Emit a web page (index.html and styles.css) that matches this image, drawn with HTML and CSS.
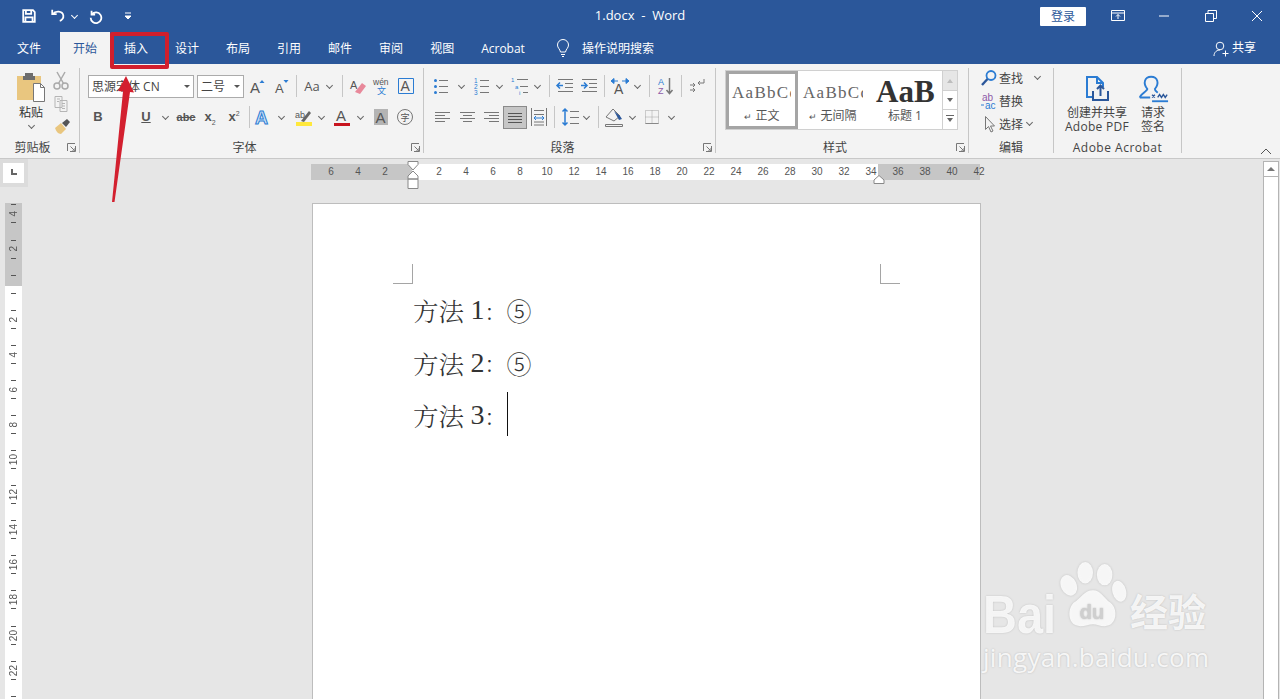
FILE: index.html
```html
<!DOCTYPE html>
<html lang="zh-CN">
<head>
    <meta charset="UTF-8">
    <meta name="viewport" content="width=device-width, initial-scale=1.0">
    <title>1.docx - Word</title>
    <link rel="stylesheet" href="styles.css">
</head>
<body>
    <!-- title bar -->
    <div class="titlebar">
        <div class="qat">
            <svg class="qat-ic" viewBox="0 0 18 18"><path d="M2.500 2.500h11l2 2v11h-13z M5.500 2.500v4h6v-4 M5 15.500v-5h8v5" stroke-width="2"/></svg>
            <svg class="qat-ic undo" viewBox="0 0 18 18"><path d="M2.500 2v5h5 M3 7c3-4 11-4 12 1.500 .5 3-2 5.500-4 6" stroke-width="2"/></svg>
            <span class="chev chev-white"></span>
            <svg class="qat-ic redo" viewBox="0 0 18 18"><path d="M4 3v4.500h4 M4.500 7a6 6 0 1 1-1.500 4" stroke-width="2"/></svg>
            <svg class="qat-more" viewBox="0 0 8 8"><path d="M1 1h6M1 4h6l-3 3z" fill="#fff" stroke="#fff"/></svg>
        </div>
        <div class="doc-title">1.docx &nbsp;-&nbsp; Word</div>
        <div class="winctl">
            <button class="signin">登录</button>
            <svg class="win-ic opt" viewBox="0 0 14 12"><path d="M.5 .5h13v10H.5zM.5 3h13M7 9V4.500M5 6.500l2-2 2 2"/></svg>
            <svg class="win-ic min" viewBox="0 0 12 12"><path d="M1 6h10"/></svg>
            <svg class="win-ic rest" viewBox="0 0 12 12"><path d="M.5 3.500h8v8h-8zM3 3.500V.5h8.500v8H8.500"/></svg>
            <svg class="win-ic cls" viewBox="0 0 12 12"><path d="M1 1l10 10M11 1L1 11"/></svg>
        </div>
    </div>

    <!-- tabs -->
    <div class="tabs">
        <div class="tab tab-file">文件</div>
        <div class="tab tab-active">开始</div>
        <div class="tab">插入</div>
        <div class="tab">设计</div>
        <div class="tab">布局</div>
        <div class="tab">引用</div>
        <div class="tab">邮件</div>
        <div class="tab">审阅</div>
        <div class="tab">视图</div>
        <div class="tab">Acrobat</div>
        <svg class="lamp" viewBox="0 0 14 18"><path d="M4.500 13C4 10 1.500 9 1.500 6a5.500 5.500 0 0 1 11 0c0 3-2.500 4-3 7zM5 15.500h4M6 17.500h2"/></svg>
        <div class="tell">操作说明搜索</div>
        <div class="share">
            <svg class="share-ic" viewBox="0 0 16 16"><circle cx="7" cy="5" r="3.800"/><path d="M1 15c0-4 3-6 6-6M9.500 12.500h6M12.500 9.500v6"/></svg>
            共享
        </div>
    </div>

    <!-- ribbon -->
    <div class="ribbon">
        <div class="group g-clip">
            <div class="group-body clip-body">
                <div class="paste">
                    <svg class="paste-ic" viewBox="0 0 30 30">
                        <path d="M1 4h24v24H1z" fill="#e9c67f" stroke="none"/>
                        <path d="M9 4V1h8v3h2v4H7V4z" fill="#6d6d6d" stroke="none"/>
                        <path d="M17.500 11.500h7l4 4v14h-11z" fill="#fff" stroke="#777"/>
                        <path d="M24.500 11.500v4h4" stroke="#777"/>
                    </svg>
                    <div class="paste-label">粘贴</div>
                    <span class="chev"></span>
                </div>
                <div class="clip-col">
                    <svg class="ic" viewBox="0 0 24 24"><circle cx="8" cy="18" r="3" stroke="#aaa" stroke-width="1.500"/><circle cx="16" cy="18" r="3" stroke="#aaa" stroke-width="1.500"/><path d="M9.500 15.500L16 4M14.500 15.500L8 4" stroke="#aaa" stroke-width="1.500"/></svg>
                    <svg class="ic" viewBox="0 0 24 24"><path d="M6 5.500h7v11H6zM11 9.500h7v11h-7zM8 8h3M8 10.500h2M13 12.500h3M13 15h3M13 17.500h3" stroke="#b5b5b5"/></svg>
                    <svg class="ic" viewBox="0 0 24 24"><path d="M6 14l6-5 5 6-5 5c-3 0-5-3-6-6z" fill="#e9c67f" stroke="none"/><path d="M13 9l5-4 3 3-4 5z" fill="#555" stroke="none"/></svg>
                </div>
            </div>
            <div class="group-label">剪贴板</div>
            <svg class="launch" viewBox="0 0 9 9"><path d="M.5 8V.5H8M8.500 3v5.500H3M3.500 3.500l4 4M8 5v3H5"/></svg>
        </div>

        <div class="group g-font">
            <div class="group-body">
                <div class="row row-font1">
                    <div class="select select-font">思源宋体 CN</div>
                    <div class="select select-size">二号</div>
                    <svg class="ic" viewBox="0 0 24 24"><text x="5" y="19" font-size="15">A</text><path d="M14.500 9l2.500-3 2.500 3z" fill="#2b7cd3" stroke="none"/></svg>
                    <svg class="ic" viewBox="0 0 24 24"><text x="6" y="19" font-size="13">A</text><path d="M14.500 6l2.500 3 2.500-3z" fill="#2b7cd3" stroke="none"/></svg>
                    <span class="sep"></span>
                    <div class="tool tool-text">Aa</div>
                    <span class="chev"></span>
                    <span class="sep sep-wide"></span>
                    <svg class="ic" viewBox="0 0 24 24"><text x="4" y="15" font-size="11">A</text><path d="M9 18l7-9 4 3-6 8z" fill="#e8889a" stroke="none"/></svg>
                    <svg class="ic" viewBox="0 0 24 24"><text x="3" y="11" font-size="8.500">wén</text><text class="blue" x="7" y="20" font-size="9">文</text></svg>
                    <svg class="ic" viewBox="0 0 24 24"><path d="M4.500 4.500h15v15h-15z" stroke="#2b7cd3"/><text x="6.500" y="17" font-size="14">A</text></svg>
                </div>
                <div class="row row-font2">
                    <div class="tool tool-b">B</div>
                    <div class="tool tool-i">I</div>
                    <div class="tool tool-u">U</div>
                    <span class="chev chev-14"></span>
                    <div class="tool tool-abc ml2">abc</div>
                    <div class="tool tool-sub">x<sub>2</sub></div>
                    <div class="tool tool-sub">x<sup>2</sup></div>
                    <span class="sep sep-2"></span>
                    <svg class="ic" viewBox="0 0 24 24"><text class="a-outline" x="3" y="19" font-size="18">A</text></svg>
                    <span class="chev"></span>
                    <svg class="ic ml6" viewBox="0 0 24 24"><text x="3" y="13" font-size="9">ab</text><path d="M9 16l8-10 2 2-7 9z" fill="#666" stroke="none"/><path d="M4 17h16v4H4z" fill="#ffe83c" stroke="none"/></svg>
                    <span class="chev"></span>
                    <svg class="ic ml4" viewBox="0 0 24 24"><text x="6" y="16" font-size="15">A</text><path d="M4 18h16v3H4z" fill="#c8141e" stroke="none"/></svg>
                    <span class="chev ml1"></span>
                    <svg class="ic ml4" viewBox="0 0 24 24"><path d="M5 4h14v16H5z" fill="#b4b4b4" stroke="none"/><text x="6.500" y="18" font-size="15">A</text></svg>
                    <svg class="ic" viewBox="0 0 24 24"><circle cx="12" cy="12" r="7.500"/><text x="7.500" y="15.500" font-size="9">字</text></svg>
                </div>
            </div>
            <div class="group-label">字体</div>
            <svg class="launch" viewBox="0 0 9 9"><path d="M.5 8V.5H8M8.500 3v5.500H3M3.500 3.500l4 4M8 5v3H5"/></svg>
        </div>

        <div class="group g-para">
            <div class="group-body">
                <div class="row row-para1">
                    <svg class="ic" viewBox="0 0 24 24"><path d="M9 6.500h9M9 12.500h9M9 18.500h9"/><circle class="dot" cx="5.500" cy="6.500" r="1.500"/><circle class="dot" cx="5.500" cy="12.500" r="1.500"/><circle class="dot" cx="5.500" cy="18.500" r="1.500"/></svg>
                    <span class="chev chev-14"></span>
                    <svg class="ic ml2" viewBox="0 0 24 24"><path d="M10 6.500h9M10 12.500h9M10 18.500h9"/><text class="blue" x="4" y="9" font-size="6.500">1</text><text class="blue" x="4" y="15" font-size="6.500">2</text><text class="blue" x="4" y="21" font-size="6.500">3</text></svg>
                    <span class="chev"></span>
                    <svg class="ic ml4" viewBox="0 0 24 24"><path d="M9 5.500h11M12 12.500h8M15 18.500h5"/><text class="blue" x="3" y="8" font-size="6">1</text><text class="blue" x="7" y="15" font-size="6">a</text><text class="blue" x="11" y="21" font-size="6">i</text></svg>
                    <span class="chev"></span>
                    <span class="sep sep-para"></span>
                    <svg class="ic" viewBox="0 0 24 24"><path d="M5 5.500h15M12 9.500h8M12 13.500h8M5 17.500h15" /><path d="M10 11.500H4M7 8.500l-3 3 3 3" stroke="#2b7cd3" stroke-width="1.500"/></svg>
                    <svg class="ic" viewBox="0 0 24 24"><path d="M5 5.500h15M12 9.500h8M12 13.500h8M5 17.500h15"/><path d="M4 11.500h6M7 8.500l3 3-3 3" stroke="#2b7cd3" stroke-width="1.500"/></svg>
                    <span class="sep"></span>
                    <svg class="ic" viewBox="0 0 24 24"><text x="6" y="20" font-size="14">A</text><path d="M3 7l3-2.500v5zM21 7l-3-2.500v5zM6 7h4M14 7h4" fill="#2b7cd3" stroke="#2b7cd3"/></svg>
                    <span class="chev"></span>
                    <span class="sep sep-para"></span>
                    <svg class="ic" viewBox="0 0 24 24"><text class="blue" x="5" y="11" font-size="9">A</text><text class="purple" x="5" y="20" font-size="9">Z</text><path d="M16.500 4v15M13.500 16l3 3.500 3-3.500" stroke-width="1.500"/></svg>
                    <span class="sep sep-3"></span>
                    <svg class="ic" viewBox="0 0 24 24"><path d="M19 5v4h-6M15 7l-2 2 2 2M5 11h5M8 9l2 2-2 2M5 16h5M8 14l2 2-2 2" /></svg>
                </div>
                <div class="row row-para2">
                    <svg class="ic" viewBox="0 0 24 24"><path d="M5 7.500h15M5 10.500h10M5 13.500h15M5 16.500h10"/></svg>
                    <svg class="ic ml1" viewBox="0 0 24 24"><path d="M5 7.500h15M8 10.500h9M5 13.500h15M8 16.500h9"/></svg>
                    <svg class="ic" viewBox="0 0 24 24"><path d="M5 7.500h15M10 10.500h10M5 13.500h15M10 16.500h10"/></svg>
                    <div class="tool tool-active"><svg class="ic-in" viewBox="0 0 24 24"><path d="M5 7.500h14M5 10.500h14M5 13.500h14M5 16.500h14" stroke="#555"/></svg></div>
                    <svg class="ic" viewBox="0 0 24 24"><path d="M4.500 3v18M19.500 3v18M7 5.500h10M7 9.500h10M7 17h10M7 20h10" /><path d="M7 13h10M9 11l-2 2 2 2M15 11l2 2-2 2" stroke="#2b7cd3"/></svg>
                    <span class="sep sep-line"></span>
                    <svg class="ic" viewBox="0 0 24 24"><path d="M11 6.500h9M11 12.500h9M11 18.500h9"/><path d="M6 4v16M3.500 6.500L6 4l2.500 2.500M3.500 17.500L6 20l2.500-2.500" stroke="#2b7cd3" stroke-width="1.500"/></svg>
                    <span class="chev chev-line"></span>
                    <span class="sep sep-shade"></span>
                    <svg class="ic" viewBox="0 0 24 24"><path d="M4 12l7-8 7 7-6 5z"/><path d="M12 6l6 5 2 3-3 1z" fill="#2b579a" stroke="none"/><path d="M3.500 19.500h17v2h-17z" stroke="#777"/></svg>
                    <span class="chev ml1"></span>
                    <svg class="ic ml3" viewBox="0 0 24 24"><path class="dash" d="M5.500 5.500h13v13h-13zM12 5.500v13M5.500 12h13" /><path d="M5.500 18.500h13" stroke="#888"/></svg>
                    <span class="chev ml2"></span>
                </div>
            </div>
            <div class="group-label">段落</div>
            <svg class="launch" viewBox="0 0 9 9"><path d="M.5 8V.5H8M8.500 3v5.500H3M3.500 3.500l4 4M8 5v3H5"/></svg>
        </div>

        <div class="group g-style">
            <div class="group-body style-body">
                <div class="gallery">
                    <div class="style-item style-on">
                        <div class="style-sample">AaBbCc</div>
                        <div class="style-name"><span class="enter">↵</span> 正文</div>
                    </div>
                    <div class="style-item">
                        <div class="style-sample">AaBbCc</div>
                        <div class="style-name"><span class="enter">↵</span> 无间隔</div>
                    </div>
                    <div class="style-item style-h1">
                        <div class="style-sample">AaB</div>
                        <div class="style-name">标题 1</div>
                    </div>
                    <div class="style-scroll">
                        <div class="scroll-btn scroll-off"><span class="tri tri-up"></span></div>
                        <div class="scroll-btn"><span class="tri tri-down"></span></div>
                        <div class="scroll-btn"><span class="tri tri-more"></span></div>
                    </div>
                </div>
            </div>
            <div class="group-label">样式</div>
            <svg class="launch" viewBox="0 0 9 9"><path d="M.5 8V.5H8M8.500 3v5.500H3M3.500 3.500l4 4M8 5v3H5"/></svg>
        </div>

        <div class="group g-edit">
            <div class="group-body edit-body">
                <div class="edit-row">
                    <svg class="edit-ic" viewBox="0 0 18 18"><circle cx="11" cy="6.500" r="4.500" stroke="#2b7cd3" stroke-width="1.800"/><path d="M7.500 10L2 16" stroke="#2b579a" stroke-width="2.400"/></svg>
                    <span>查找</span><span class="chev edit-chev"></span>
                </div>
                <div class="edit-row">
                    <svg class="edit-ic" viewBox="0 0 18 18"><text class="purple" x="2" y="9" font-size="10">ab</text><text class="blue" x="5" y="17" font-size="10">ac</text><path d="M1 13h3" stroke="#2b7cd3"/></svg>
                    <span>替换</span>
                </div>
                <div class="edit-row">
                    <svg class="edit-ic" viewBox="0 0 18 18"><path d="M5.500 1.500v13l3-3 2.500 5.500 2-1-2.500-5h4z" stroke="#777"/></svg>
                    <span>选择</span><span class="chev edit-chev2"></span>
                </div>
            </div>
            <div class="group-label group-label-c">编辑</div>
        </div>

        <div class="group g-acro">
            <div class="group-body acro-body">
                <div class="acro-btn acro-pdf">
                    <svg class="acro-ic" viewBox="0 0 26 28"><path d="M8 22H3V2h10l6 6v4M13 2v6h6" stroke="#2b7cd3" stroke-width="2"/><path d="M9 16v9h15v-9M16.500 21v-10M13 14l3.500-3.500L20 14" stroke="#2b579a" stroke-width="2"/></svg>
                    <div class="acro-text">创建并共享</div>
                    <div class="acro-text acro-latin">Adobe PDF</div>
                </div>
                <div class="acro-btn acro-sign">
                    <svg class="acro-ic sign-ic" viewBox="0 0 34 28"><path d="M3 23c0-3 8-7 8-9-5-6-3-13 4-13s9 7 4 13c0 2 2 3 3 4M3 23h11" stroke="#2b7cd3" stroke-width="2"/><path d="M16 27h17" stroke="#2b7cd3" stroke-width="2"/><path d="M16 20l3 3M19 20l-3 3M22 23l2-3 2 3 2-3 2 3 2-3" stroke="#2b579a" stroke-width="1.500"/></svg>
                    <div class="acro-text">请求</div>
                    <div class="acro-text">签名</div>
                </div>
            </div>
            <div class="group-label group-label-c group-label-acro">Adobe Acrobat</div>
        </div>

        <svg class="collapse" viewBox="0 0 12 7"><path d="M1 6l5-5 5 5"/></svg>
    </div>

    <!-- document area -->
    <div class="workspace">
        <div class="left-col">
            <div class="corner"><div class="corner-btn"><span class="tab-mark"></span></div></div>
            <div class="vruler">
                <div class="v-cell"><span>4</span></div>
                <div class="v-cell"><span>2</span></div>
                <div class="v-cell"></div>
                <div class="v-cell"><span>2</span></div>
                <div class="v-cell"><span>4</span></div>
                <div class="v-cell"><span>6</span></div>
                <div class="v-cell"><span>8</span></div>
                <div class="v-cell"><span>10</span></div>
                <div class="v-cell"><span>12</span></div>
                <div class="v-cell"><span>14</span></div>
                <div class="v-cell"><span>16</span></div>
                <div class="v-cell"><span>18</span></div>
                <div class="v-cell"><span>20</span></div>
                <div class="v-cell"><span>22</span></div>
                <div class="v-cell"></div>
            </div>
        </div>
        <div class="doc-col">
            <div class="hruler">
                <div class="h-gray h-left">
                    <span>6</span><span>4</span><span>2</span>
                </div>
                <div class="h-white">
                    <span>2</span><span>4</span><span>6</span><span>8</span><span>10</span><span>12</span><span>14</span><span>16</span><span>18</span><span>20</span><span>22</span><span>24</span><span>26</span><span>28</span><span>30</span><span>32</span><span>34</span>
                </div>
                <div class="h-gray h-right">
                    <span>36</span><span>38</span><span>40</span><span>42</span>
                </div>
                <svg class="indent-mark" viewBox="0 0 12 28"><path d="M1 .5h10v3L6 9 1 3.500zM6 10l5 5v3H1v-3zM1 18h10v9.500H1z"/></svg>
                <svg class="right-mark" viewBox="0 0 12 9"><path d="M6 .5l5 4.500v3.500H1V5z"/></svg>
            </div>
            <div class="page">
                <div class="crops">
                    <span class="crop crop-l"></span>
                    <span class="crop crop-r"></span>
                </div>
                <div class="doc-line">方法 <span class="num">1</span><span class="colon">：</span><span class="circled">⑤</span></div>
                <div class="doc-line">方法 <span class="num">2</span><span class="colon">：</span><span class="circled">⑤</span></div>
                <div class="doc-line">方法 <span class="num">3</span><span class="colon">：</span><span class="caret"></span></div>
            </div>
        </div>
        <div class="vscroll">
            <div class="vscroll-up"><span class="tri tri-up2"></span></div>
        </div>
    </div>

    <!-- annotations on top of the screenshot -->
    <div class="redbox"></div>
    <svg class="arrow" viewBox="0 0 40 140"><path d="M15 8l-8 15 5 .5L1 134l2.500 0L19 24l4 .5z" fill="#d3202f"/></svg>

    <div class="watermark">
        <div class="wm-top">
            <span class="wm-bai">Bai</span>
            <svg class="wm-paw" viewBox="0 0 70 74">
                <ellipse cx="10" cy="24" rx="8" ry="11" transform="rotate(-25 10 24)"/>
                <ellipse cx="27" cy="11" rx="8" ry="11"/>
                <ellipse cx="47" cy="13" rx="8" ry="11"/>
                <ellipse cx="62" cy="30" rx="7" ry="11" transform="rotate(-15 62 30)"/>
                <path d="M35 29c8 0 11 8 18 13 8 6 7 24-6 24-5 0-8-2-12-2s-8 2-13 2C9 66 8 49 15 42c8-5 11-13 20-13z"/>
                <text x="21" y="59" font-size="21">du</text>
            </svg>
            <span class="wm-jy">经验</span>
        </div>
        <div class="wm-url">jingyan.baidu.com</div>
    </div>
</body>
</html>
```

FILE: styles.css
```css
* {
    box-sizing: border-box;
}
html, body {
    margin: 0;
    padding: 0;
    height: 699px;
    overflow: hidden;
}
body {
    position: relative;
    display: flex;
    flex-direction: column;
    font-family: "Open Sans", "Noto Sans CJK SC", sans-serif;
    font-size: 12px;
    color: #444;
    background-color: #e6e6e6;
}

/* title bar */
.titlebar {
    height: 32px;
    background-color: #2b579a;
    color: white;
    display: grid;
    grid-template-columns: 1fr auto 1fr;
    align-items: center;
}
.qat {
    display: flex;
    align-items: center;
    padding-left: 21px;
}
.qat-ic {
    width: 16px;
    height: 16px;
    fill: none;
    stroke: white;
}
.undo {
    margin-left: 13px;
}
.redo {
    margin-left: 9px;
}
.qat-more {
    width: 8px;
    height: 8px;
    margin-left: 20px;
}
.doc-title {
    font-size: 13px;
    line-height: 30px;
    padding-bottom: 2px;
}
.winctl {
    display: flex;
    align-items: center;
    justify-content: flex-end;
}
.signin {
    width: 46px;
    height: 19px;
    padding: 0;
    border: none;
    border-radius: 1px;
    background-color: white;
    color: #2b579a;
    font: inherit;
    line-height: 19px;
}
.win-ic {
    fill: none;
    stroke: white;
    width: 12px;
    height: 12px;
}
.opt {
    width: 14px;
    margin-left: 25px;
}
.min {
    margin-left: 33px;
}
.rest {
    margin-left: 35px;
}
.cls {
    margin-left: 34px;
    margin-right: 17px;
}

/* tabs */
.tabs {
    height: 32px;
    background-color: #2b579a;
    color: #fff;
    display: flex;
    align-items: stretch;
    padding-left: 4px;
    line-height: 34px;
}
.tab {
    padding: 0 13px;
    margin-right: 1px;
}
.tab-file {
    margin-right: 6px;
}
.tab-active {
    background-color: #f3f3f3;
    color: #2b579a;
}
.lamp {
    width: 14px;
    height: 18px;
    margin: 7px 0 0 17px;
    fill: none;
    stroke: white;
}
.tell {
    margin-left: 12px;
}
.share {
    margin-left: auto;
    margin-right: 24px;
    display: flex;
    align-items: center;
    gap: 3px;
}
.share-ic {
    width: 16px;
    height: 16px;
    margin-top: 2px;
    fill: none;
    stroke: white;
}

/* ribbon */
.ribbon {
    position: relative;
    height: 95px;
    background-color: #f3f3f3;
    border-bottom: 1px solid #c8c8c8;
    display: flex;
    align-items: flex-start;
    flex-shrink: 0;
}
.group {
    position: relative;
    margin-top: 4px;
    height: 85px;
    border-right: 1px solid #c6c6c6;
}
.g-clip {
    width: 80px;
}
.g-font {
    width: 344px;
}
.g-para {
    width: 292px;
}
.g-style {
    width: 253px;
}
.g-edit {
    width: 85px;
}
.g-acro {
    width: 128px;
}
.group-body {
    display: flow-root;
    height: 72px;
}
.group-label {
    text-align: center;
    padding-right: 14px;
    line-height: 16px;
    color: #444;
}
.group-label-c {
    padding-right: 0;
}
.group-label-acro {
    letter-spacing: .5px;
}
.launch {
    position: absolute;
    right: 3px;
    bottom: 1px;
    width: 9px;
    height: 9px;
    fill: none;
    stroke: #777;
}
.row {
    display: flex;
    align-items: center;
    height: 24px;
}
.row-font1 {
    margin-top: 6px;
    padding-left: 8px;
}
.row-font2 {
    margin-top: 7px;
    padding-left: 6px;
}
.row-para1 {
    margin-top: 6px;
    padding-left: 6px;
}
.row-para2 {
    margin-top: 7px;
    padding-left: 6px;
}
.ic {
    width: 24px;
    height: 24px;
    flex-shrink: 0;
    fill: none;
    stroke: #777;
}
.ic text, .edit-ic text, .wm-paw text {
    font-family: "Liberation Sans", "Noto Sans CJK SC", sans-serif;
    fill: #555;
    stroke: none;
}
.ic text.blue, .edit-ic text.blue {
    fill: #2b7cd3;
}
.ic text.purple, .edit-ic text.purple {
    fill: #8e5aa8;
}
.ic text.a-outline {
    fill: #cfe3f6;
    stroke: #2b7cd3;
    stroke-width: 1px;
    font-weight: bold;
}
.dot {
    fill: #2b7cd3;
    stroke: none;
}
.ic-in {
    width: 24px;
    height: 24px;
    fill: none;
}
.dash {
    stroke: #a0a0a0;
    stroke-dasharray: 1 1;
}
.tool {
    width: 24px;
    height: 24px;
    flex-shrink: 0;
    text-align: center;
    line-height: 24px;
    color: #555;
    font-family: "Liberation Sans", sans-serif;
}
.tool-text {
    font-family: "Open Sans", sans-serif;
    font-size: 13px;
}
.tool-b {
    font-weight: bold;
    font-size: 13px;
}
.tool-i {
    font-style: italic;
    font-size: 13px;
}
.tool-u {
    font-weight: bold;
    font-size: 13px;
    text-decoration: underline;
}
.tool-abc {
    font-size: 11px;
    font-weight: bold;
    text-decoration: line-through;
}
.tool-sub {
    font-weight: bold;
    font-size: 13px;
}
.tool-sub sub, .tool-sub sup {
    font-size: 7px;
    font-weight: normal;
    line-height: 0;
}
.tool-active {
    height: 23px;
    background-color: #c6c6c6;
    border: 1px solid #8a8a8a;
}
.tool-active .ic-in {
    margin: -1px;
}
.select {
    height: 23px;
    background-color: white;
    border: 1px solid #ababab;
    line-height: 21px;
    padding-left: 3px;
    color: #444;
    position: relative;
    flex-shrink: 0;
}
.select::after {
    content: "";
    position: absolute;
    right: 3px;
    top: 9px;
    border-left: 3px solid transparent;
    border-right: 3px solid transparent;
    border-top: 3px solid #555;
}
.select-font {
    width: 106px;
}
.select-size {
    width: 47px;
    margin-left: 3px;
    margin-right: 1px;
}
.chev {
    display: inline-flex;
    justify-content: center;
    align-items: center;
    width: 10px;
    height: 10px;
    flex-shrink: 0;
}
.chev::before {
    content: "";
    width: 4px;
    height: 4px;
    margin-top: -2px;
    border-right: 1px solid #666;
    border-bottom: 1px solid #666;
    transform: rotate(45deg);
}
.chev-white {
    margin-left: 3px;
}
.chev-white::before {
    border-color: white;
}
.chev-14 {
    width: 14px;
}
.sep {
    width: 1px;
    height: 22px;
    margin: 0 3px;
    flex-shrink: 0;
    background-color: #c6c6c6;
}
.sep-wide {
    margin: 0 3px 0 8px;
}
.sep-2 {
    margin: 0 2px 0 3px;
}
.sep-para {
    margin: 0 3px 0 7px;
}
.sep-3 {
    margin: 0 3px 0 4px;
}
.sep-line {
    margin: 0 4px 0 3px;
}
.chev-line {
    margin-left: -2px;
}
.sep-shade {
    margin: 0 3px 0 7px;
}
.ml1 {
    margin-left: 1px;
}
.ml2 {
    margin-left: 2px;
}
.ml3 {
    margin-left: 3px;
}
.ml4 {
    margin-left: 4px;
}
.ml6 {
    margin-left: 6px;
}

/* clipboard */
.clip-body {
    display: flex;
}
.paste {
    width: 49px;
    padding: 4px 0 0 16px;
}
.paste-ic {
    display: block;
    width: 30px;
    height: 30px;
    fill: none;
}
.paste-label {
    width: 30px;
    text-align: center;
    line-height: 16px;
    margin-top: 3px;
    color: #333;
}
.paste .chev {
    display: flex;
    width: 30px;
}
.clip-col {
    display: flex;
    flex-direction: column;
}
.clip-col .ic {
    margin-bottom: -1px;
}

/* styles gallery */
.style-body {
    padding: 2px 0 0 9px;
}
.gallery {
    display: flex;
    width: 233px;
    height: 60px;
    background-color: white;
    border: 1px solid #d0d0d0;
}
.style-item {
    width: 72px;
    overflow: hidden;
}
.style-on {
    border: 3px solid #a5a5a5;
    height: 58px;
    background-color: #fff;
    margin-right: -1px;
}
.style-sample {
    font-family: "Liberation Serif", serif;
    font-size: 17px;
    letter-spacing: 1.3px;
    line-height: 34px;
    white-space: nowrap;
    color: #666;
    width: 66px;
    height: 32px;
    margin-top: 5px;
    padding-left: 6px;
    overflow: hidden;
}
.style-on .style-sample {
    width: 62px;
    margin-top: 2px;
    padding-left: 3px;
}
.style-name {
    line-height: 16px;
    color: #555;
    text-align: center;
}
.enter {
    font-size: 9px;
}
.style-h1 .style-sample {
    font-size: 31px;
    font-weight: bold;
    letter-spacing: 0;
    color: #333;
    line-height: 32px;
    width: 74px;
    padding-left: 7px;
}
.style-scroll {
    margin-left: auto;
    width: 15px;
    border-left: 1px solid #d0d0d0;
}
.scroll-btn {
    height: 19px;
    display: flex;
    justify-content: center;
    align-items: center;
    border-bottom: 1px solid #d0d0d0;
}
.scroll-btn:last-child {
    border-bottom: none;
}
.scroll-off {
    height: 20px;
    background-color: #e6e6e6;
}
.tri {
    display: block;
    width: 0;
    height: 0;
    border-left: 3px solid transparent;
    border-right: 3px solid transparent;
}
.tri-up {
    border-bottom: 4px solid #bdbdbd;
}
.tri-down {
    border-top: 4px solid #666;
}
.tri-more {
    border-top: 4px solid #666;
    position: relative;
}
.tri-more::before {
    content: "";
    position: absolute;
    left: -4px;
    top: -7px;
    width: 8px;
    height: 1px;
    background-color: #666;
}

/* editing */
.edit-body {
    padding: 0 0 0 11px;
}
.edit-row {
    display: flex;
    align-items: center;
    height: 23px;
    color: #444;
}
.edit-row:first-child {
    margin-top: -2px;
}
.edit-ic {
    width: 18px;
    height: 18px;
    margin-right: 1px;
    fill: none;
    flex-shrink: 0;
}
.edit-chev {
    margin-left: 9px;
}
.edit-chev2 {
    margin-left: 1px;
}

/* acrobat */
.acro-body {
    display: flex;
}
.acro-btn {
    text-align: center;
    color: #444;
}
.acro-text {
    height: 14px;
    line-height: 14px;
    white-space: nowrap;
}
.acro-latin {
    letter-spacing: .3px;
}
.acro-pdf {
    width: 70px;
    margin-left: 8px;
}
.acro-sign {
    width: 42px;
}
.acro-ic {
    display: block;
    width: 26px;
    height: 28px;
    margin: 7px auto 3px;
    fill: none;
}
.sign-ic {
    width: 32px;
}
.collapse {
    position: absolute;
    right: 8px;
    bottom: 3px;
    width: 12px;
    height: 7px;
    fill: none;
    stroke: #555;
}

/* workspace */
.workspace {
    flex: 1;
    display: flex;
    min-height: 0;
    background-color: #e6e6e6;
}
.left-col {
    width: 28px;
    flex-shrink: 0;
    display: flex;
    flex-direction: column;
}
.corner {
    height: 28px;
    background-color: #dcdcdc;
    padding: 4px 4px 3px 3px;
}
.corner-btn {
    height: 20px;
    background-color: white;
    position: relative;
}
.tab-mark {
    position: absolute;
    left: 8px;
    top: 6px;
    width: 6px;
    height: 6px;
    border-left: 2px solid #666;
    border-bottom: 2px solid #666;
}
.vruler {
    width: 17px;
    height: 497px;
    margin: 16px 0 0 5px;
    overflow: hidden;
    background: linear-gradient(#c6c6c6 83px, white 83px);
}
.v-cell {
    height: 35.1px;
    position: relative;
    display: flex;
    justify-content: center;
    align-items: center;
    font-family: "Liberation Sans", sans-serif;
    font-size: 10px;
    color: #555;
}
.v-cell:first-child {
    margin-top: -6.5px;
}
.v-cell span {
    writing-mode: vertical-rl;
    transform: rotate(180deg);
    line-height: 17px;
}
.v-cell::before, .v-cell::after {
    content: "";
    position: absolute;
    left: 6px;
    width: 5px;
    height: 1px;
    background-color: #555;
}
.v-cell::before {
    top: 8px;
}
.v-cell::after {
    top: 26px;
}
.doc-col {
    flex: 1;
    min-width: 0;
}
.hruler {
    position: relative;
    display: flex;
    width: 669px;
    height: 16px;
    margin: 5px 0 0 283px;
    font-family: "Liberation Sans", sans-serif;
    font-size: 10px;
    line-height: 16px;
    color: #555;
}
.hruler span {
    width: 27px;
    flex-shrink: 0;
    text-align: center;
}
.h-gray {
    background-color: #c6c6c6;
    display: flex;
}
.h-left {
    width: 101px;
    justify-content: flex-end;
    padding-right: 13.5px;
}
.h-white {
    width: 466px;
    background-color: white;
    display: flex;
    padding-left: 13.5px;
}
.h-right {
    width: 102px;
    padding-left: 6.5px;
}
.indent-mark {
    position: absolute;
    left: 96px;
    top: -3px;
    width: 12px;
    height: 28px;
    fill: white;
    stroke: #888;
}
.right-mark {
    position: absolute;
    left: 562px;
    top: 11px;
    width: 12px;
    height: 9px;
    fill: white;
    stroke: #888;
}
.page {
    width: 669px;
    height: 520px;
    margin: 23px 0 0 284px;
    background-color: white;
    border: 1px solid #bdbdbd;
    border-bottom: none;
    padding-top: 60px;
    color: #333;
}
.crops {
    display: flex;
    justify-content: space-between;
    padding: 0 80px 0 80px;
}
.crop {
    width: 20px;
    height: 20px;
    border-bottom: 1px solid #a5a5a5;
}
.crop-l {
    border-right: 1px solid #a5a5a5;
}
.crop-r {
    border-left: 1px solid #a5a5a5;
}
.doc-line {
    display: flex;
    align-items: center;
    height: 52.5px;
    padding-left: 100px;
    font-family: "Noto Serif CJK SC", "Noto Sans CJK SC", serif;
    font-size: 25.5px;
    font-weight: 300;
    white-space: pre;
}
.doc-line:first-of-type {
    margin-top: 7px;
}
.num {
    font-family: "Liberation Serif", serif;
    font-size: 28px;
}
.colon {
    font-size: 22px;
}
.circled {
    font-family: "Noto Sans CJK SC", sans-serif;
    font-size: 25px;
}
.caret {
    display: block;
    width: 1px;
    height: 44px;
    margin-top: -3px;
    background-color: #111;
}

.vscroll {
    width: 16px;
    margin: 2px 1px 0 0;
    flex-shrink: 0;
    background-color: white;
    border: 1px solid #b4b4b4;
    border-width: 1px 1px 0 1px;
}
.vscroll-up {
    height: 15px;
    border-bottom: 1px solid #b4b4b4;
    display: flex;
    justify-content: center;
    align-items: center;
}
.tri-up2 {
    border-left-width: 4px;
    border-right-width: 4px;
    border-bottom: 4px solid #777;
}

/* overlays */
.redbox {
    position: absolute;
    left: 110px;
    top: 32px;
    width: 59px;
    height: 37px;
    border: 4px solid #d11f2d;
    border-radius: 2px;
}
.arrow {
    position: absolute;
    left: 111px;
    top: 68px;
    width: 40px;
    height: 140px;
}
.watermark {
    position: absolute;
    left: 983px;
    top: 560px;
    width: 230px;
    color: rgba(255, 255, 255, .85);
    text-shadow: 0 0 2px #b9b9b9;
}
.wm-top {
    display: flex;
    align-items: flex-end;
    height: 86px;
}
.wm-bai {
    font-family: "Liberation Sans", sans-serif;
    font-weight: bold;
    font-size: 54px;
    line-height: 64px;
    transform: scaleX(.87);
    transform-origin: left;
    width: 76px;
}
.wm-paw {
    width: 68px;
    height: 74px;
    margin-bottom: 11px;
    flex-shrink: 0;
    fill: rgba(255, 255, 255, .85);
    filter: drop-shadow(0 0 1px #bbb);
}
.wm-paw text {
    fill: #cfcfcf;
    font-weight: bold;
}
.wm-jy {
    font-family: "Noto Sans CJK SC", sans-serif;
    font-weight: bold;
    font-size: 38px;
    line-height: 60px;
    margin-left: 3px;
    margin-bottom: 6px;
    white-space: nowrap;
}
.wm-url {
    font-family: "Open Sans", sans-serif;
    font-size: 26px;
    line-height: 32px;
    margin-top: -5px;
    letter-spacing: .3px;
    white-space: nowrap;
}
```
